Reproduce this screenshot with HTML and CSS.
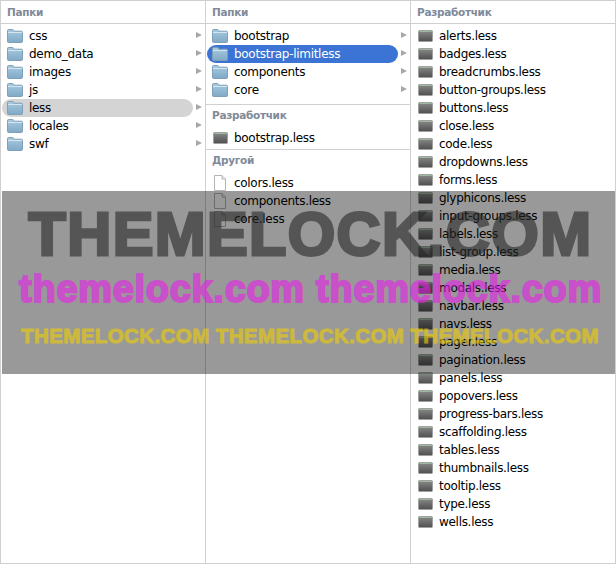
FILE: index.html
```html
<!DOCTYPE html>
<html lang="ru">
<head>
    <meta charset="UTF-8">
    <meta name="viewport" content="width=device-width, initial-scale=1.0">
    <title>Папки</title>
    <link rel="stylesheet" href="styles.css">
</head>
<body>
    <svg class="defs" width="0" height="0">
        <defs>
            <linearGradient id="folder-grad" x1="0" y1="0" x2="0" y2="1">
                <stop offset="0" stop-color="#a9cbe0"/>
                <stop offset="1" stop-color="#7fa9c6"/>
            </linearGradient>
            <linearGradient id="less-grad" x1="0" y1="0" x2="0" y2="1">
                <stop offset="0" stop-color="#8a8a8a"/>
                <stop offset="1" stop-color="#4f4f4f"/>
            </linearGradient>
            <symbol id="folder" viewBox="0 0 16 14">
                <path d="M0.5 3V1.6Q0.5 0.5 1.6 0.5H5.4Q6.4 0.5 6.6 1.5L6.8 2.2H14.4Q15.5 2.2 15.5 3.3V12.4Q15.5 13.5 14.4 13.5H1.6Q0.5 13.5 0.5 12.4Z" fill="url(#folder-grad)" stroke="#7fa0b8"/>
                <path d="M1 3.5H15" stroke="#d4e6f1" fill="none"/>
            </symbol>
            <symbol id="less" viewBox="0 0 15 12">
                <rect x="0.5" y="0.5" width="14" height="11" rx="1" fill="url(#less-grad)" stroke="#a0a0a0"/>
                <path d="M1.5 1.5H13.5" stroke="#9dbb9d" fill="none"/>
            </symbol>
            <symbol id="page" viewBox="0 0 12 16">
                <path d="M0.5 0.5H8L11.5 4V15.5H0.5Z" fill="#fff" stroke="#b4b4b4"/>
                <path d="M8 0.5V4H11.5" fill="#e8e8e8" stroke="#b4b4b4"/>
            </symbol>
        </defs>
    </svg>

    <div class="finder">
        <div class="column">
            <div class="head head-first">Папки</div>
            <ul class="list">
                <li class="row"><svg class="ico-folder"><use href="#folder"/></svg><span class="name">css</span><i class="arrow"></i></li>
                <li class="row"><svg class="ico-folder"><use href="#folder"/></svg><span class="name">demo_data</span><i class="arrow"></i></li>
                <li class="row"><svg class="ico-folder"><use href="#folder"/></svg><span class="name">images</span><i class="arrow"></i></li>
                <li class="row"><svg class="ico-folder"><use href="#folder"/></svg><span class="name">js</span><i class="arrow"></i></li>
                <li class="row inactive"><svg class="ico-folder"><use href="#folder"/></svg><span class="name">less</span><i class="arrow"></i></li>
                <li class="row"><svg class="ico-folder"><use href="#folder"/></svg><span class="name">locales</span><i class="arrow"></i></li>
                <li class="row"><svg class="ico-folder"><use href="#folder"/></svg><span class="name">swf</span><i class="arrow"></i></li>
            </ul>
        </div>

        <div class="column">
            <div class="head head-first">Папки</div>
            <ul class="list list-folders">
                <li class="row"><svg class="ico-folder"><use href="#folder"/></svg><span class="name">bootstrap</span><i class="arrow"></i></li>
                <li class="row selected"><svg class="ico-folder"><use href="#folder"/></svg><span class="name">bootstrap-limitless</span><i class="arrow"></i></li>
                <li class="row"><svg class="ico-folder"><use href="#folder"/></svg><span class="name">components</span><i class="arrow"></i></li>
                <li class="row"><svg class="ico-folder"><use href="#folder"/></svg><span class="name">core</span><i class="arrow"></i></li>
            </ul>
            <div class="head">Разработчик</div>
            <ul class="list">
                <li class="row"><svg class="ico-less"><use href="#less"/></svg><span class="name">bootstrap.less</span></li>
            </ul>
            <div class="head">Другой</div>
            <ul class="list">
                <li class="row"><svg class="ico-page"><use href="#page"/></svg><span class="name">colors.less</span></li>
                <li class="row"><svg class="ico-page"><use href="#page"/></svg><span class="name">components.less</span></li>
                <li class="row"><svg class="ico-page"><use href="#page"/></svg><span class="name">core.less</span></li>
            </ul>
        </div>

        <div class="column">
            <div class="head head-first">Разработчик</div>
            <ul class="list">
                <li class="row"><svg class="ico-less"><use href="#less"/></svg><span class="name">alerts.less</span></li>
                <li class="row"><svg class="ico-less"><use href="#less"/></svg><span class="name">badges.less</span></li>
                <li class="row"><svg class="ico-less"><use href="#less"/></svg><span class="name">breadcrumbs.less</span></li>
                <li class="row"><svg class="ico-less"><use href="#less"/></svg><span class="name">button-groups.less</span></li>
                <li class="row"><svg class="ico-less"><use href="#less"/></svg><span class="name">buttons.less</span></li>
                <li class="row"><svg class="ico-less"><use href="#less"/></svg><span class="name">close.less</span></li>
                <li class="row"><svg class="ico-less"><use href="#less"/></svg><span class="name">code.less</span></li>
                <li class="row"><svg class="ico-less"><use href="#less"/></svg><span class="name">dropdowns.less</span></li>
                <li class="row"><svg class="ico-less"><use href="#less"/></svg><span class="name">forms.less</span></li>
                <li class="row"><svg class="ico-less"><use href="#less"/></svg><span class="name">glyphicons.less</span></li>
                <li class="row"><svg class="ico-less"><use href="#less"/></svg><span class="name">input-groups.less</span></li>
                <li class="row"><svg class="ico-less"><use href="#less"/></svg><span class="name">labels.less</span></li>
                <li class="row"><svg class="ico-less"><use href="#less"/></svg><span class="name">list-group.less</span></li>
                <li class="row"><svg class="ico-less"><use href="#less"/></svg><span class="name">media.less</span></li>
                <li class="row"><svg class="ico-less"><use href="#less"/></svg><span class="name">modals.less</span></li>
                <li class="row"><svg class="ico-less"><use href="#less"/></svg><span class="name">navbar.less</span></li>
                <li class="row"><svg class="ico-less"><use href="#less"/></svg><span class="name">navs.less</span></li>
                <li class="row"><svg class="ico-less"><use href="#less"/></svg><span class="name">pager.less</span></li>
                <li class="row"><svg class="ico-less"><use href="#less"/></svg><span class="name">pagination.less</span></li>
                <li class="row"><svg class="ico-less"><use href="#less"/></svg><span class="name">panels.less</span></li>
                <li class="row"><svg class="ico-less"><use href="#less"/></svg><span class="name">popovers.less</span></li>
                <li class="row"><svg class="ico-less"><use href="#less"/></svg><span class="name">progress-bars.less</span></li>
                <li class="row"><svg class="ico-less"><use href="#less"/></svg><span class="name">scaffolding.less</span></li>
                <li class="row"><svg class="ico-less"><use href="#less"/></svg><span class="name">tables.less</span></li>
                <li class="row"><svg class="ico-less"><use href="#less"/></svg><span class="name">thumbnails.less</span></li>
                <li class="row"><svg class="ico-less"><use href="#less"/></svg><span class="name">tooltip.less</span></li>
                <li class="row"><svg class="ico-less"><use href="#less"/></svg><span class="name">type.less</span></li>
                <li class="row"><svg class="ico-less"><use href="#less"/></svg><span class="name">wells.less</span></li>
            </ul>
        </div>
    </div>

    <div class="watermark">
        <div class="mark-big">THEMELOCK.COM</div>
        <div class="mark-pink">themelock.com themelock.com</div>
        <div class="mark-yellow">THEMELOCK.COM THEMELOCK.COM THEMELOCK.COM</div>
    </div>
</body>
</html>
```

FILE: styles.css
```css
html, body {
    margin: 0;
    padding: 0;
}
body {
    width: 616px;
    height: 564px;
    overflow: hidden;
    position: relative;
    background-color: #fff;
    font-family: "DejaVu Sans", sans-serif;
    font-size: 12px;
    color: #000;
}
.defs {
    position: absolute;
}
.finder {
    display: grid;
    grid-template-columns: 205px 205px 205px;
    height: 564px;
    box-sizing: border-box;
    border-top: 1px solid #d0d0d0;
    border-bottom: 1px solid #d0d0d0;
    border-left: 1px solid #d0d0d0;
}
.column {
    border-right: 1px solid #d0d0d0;
}
.head {
    height: 24px;
    line-height: 20px;
    padding-left: 6px;
    font-size: 10.5px;
    font-weight: bold;
    letter-spacing: -0.3px;
    color: #808a99;
    border-top: 1px solid #d0d0d0;
}
.head-first {
    border-top: none;
    height: 22px;
    line-height: 23px;
    border-bottom: 1px solid #d0d0d0;
    margin-bottom: 3px;
}
.list {
    list-style: none;
    margin: 0 0 2px;
    padding: 0;
}
.list-folders {
    margin-bottom: 5px;
}
.row {
    display: flex;
    align-items: center;
    height: 18px;
    margin: 0 12px 0 1px;
    padding-left: 5px;
    border-radius: 9px;
    position: relative;
}
.ico-folder {
    width: 16px;
    height: 14px;
    flex: none;
}
.ico-less {
    width: 15px;
    height: 12px;
    flex: none;
    margin-left: 1px;
}
.ico-page {
    width: 12px;
    height: 16px;
    flex: none;
    margin: 0 2px;
}
.name {
    margin-left: 6px;
    letter-spacing: -0.3px;
    white-space: nowrap;
}
.arrow {
    position: absolute;
    right: -9px;
    top: 5px;
    border-left: 6px solid #a8a8a8;
    border-top: 3.5px solid transparent;
    border-bottom: 3.5px solid transparent;
}
.inactive {
    background-color: #d4d4d4;
}
.selected {
    background-color: #3b74d5;
    color: #fff;
}
.watermark {
    position: absolute;
    left: 2px;
    top: 191px;
    width: 613px;
    height: 183px;
    background-color: rgba(0, 0, 0, 0.4);
    font-family: "Liberation Sans", sans-serif;
    font-weight: bold;
    text-align: center;
    white-space: nowrap;
}
.mark-big {
    margin-top: 8px;
    padding-left: 4px;
    font-size: 61px;
    line-height: 70px;
    letter-spacing: 1.4px;
    color: #282828;
    -webkit-text-stroke: 3px #282828;
    opacity: 0.6;
}
.mark-pink {
    margin-top: -2px;
    padding-left: 4px;
    font-size: 38px;
    line-height: 44px;
    letter-spacing: 0.7px;
    color: #e820e8;
    -webkit-text-stroke: 2px #e820e8;
    opacity: 0.6;
}
.mark-yellow {
    margin-top: 12px;
    padding-left: 3px;
    font-size: 20.5px;
    line-height: 26px;
    letter-spacing: 0.4px;
    color: #f0cf00;
    -webkit-text-stroke: 1px #f0cf00;
    opacity: 0.6;
}
```
